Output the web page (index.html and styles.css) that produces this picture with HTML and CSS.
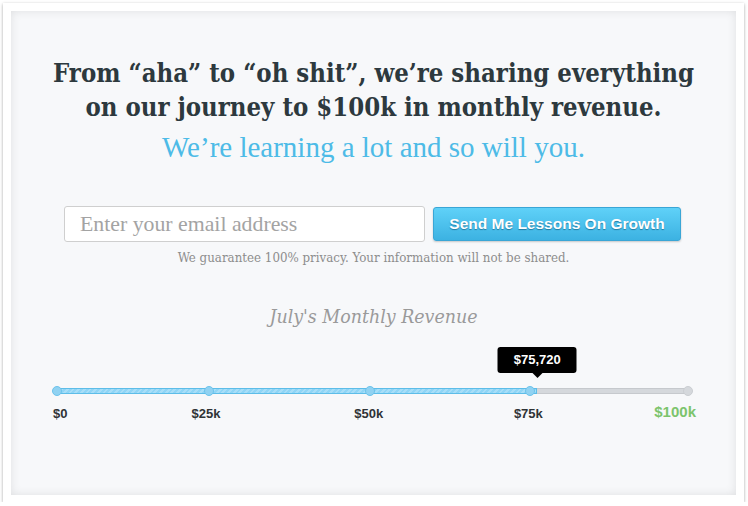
FILE: index.html
```html
<!DOCTYPE html>
<html>
<head>
<meta charset="utf-8">
<link rel="stylesheet" href="styles.css">
</head>
<body>
<div class="frame">
  <div class="panel">
    <h1 class="headline">From “aha” to “oh shit”, we’re sharing everything<br>on our journey to $100k in monthly revenue.</h1>
    <p class="subline">We’re learning a lot and so will you.</p>
    <form class="signup">
      <input class="email" type="text" placeholder="Enter your email address">
      <button class="send" type="button">Send Me Lessons On Growth</button>
    </form>
    <p class="privacy">We guarantee 100% privacy. Your information will not be shared.</p>
    <p class="revenue-title">July's Monthly Revenue</p>
    <div class="scale">
      <div class="track"></div>
      <div class="fill" style="width: 76.1%"></div>
      <span class="dot dot-on" style="left: 0%"></span>
      <span class="dot dot-on" style="left: 24.1%"></span>
      <span class="dot dot-on" style="left: 49.6%"></span>
      <span class="dot dot-on" style="left: 75%"></span>
      <span class="dot dot-off" style="left: 100%"></span>
      <div class="tip" style="left: 76.1%">$75,720</div>
      <span class="label label-first">$0</span>
      <span class="label label-mid" style="left: 23.6%">$25k</span>
      <span class="label label-mid" style="left: 49.4%">$50k</span>
      <span class="label label-mid" style="left: 74.7%">$75k</span>
      <span class="label label-goal">$100k</span>
    </div>
  </div>
</div>
</body>
</html>
```

FILE: styles.css
```css
html, body {
  margin: 0;
  padding: 0;
  background: #ffffff;
}

.frame {
  margin: 3px 4px 0 3px;
  width: 741px;
  height: 499px;
  box-sizing: border-box;
  padding: 8px 8px 7px 8px;
  background: #ffffff;
  box-shadow: 0 1px 3px rgba(0, 0, 0, 0.35);
}

.panel {
  height: 100%;
  box-sizing: border-box;
  background: #f7f8fa;
  box-shadow: inset 0 0 10px rgba(0, 0, 0, 0.10);
  padding-top: 45px;
  text-align: center;
}

.headline {
  margin: 0;
  font-family: "DejaVu Serif Condensed", "DejaVu Serif", serif;
  font-stretch: condensed;
  font-weight: bold;
  font-size: 25.5px;
  line-height: 34px;
  color: #2d393e;
}

.subline {
  margin: 6px 0 0 0;
  font-family: "Liberation Serif", serif;
  font-size: 29px;
  line-height: 34px;
  color: #4dbbe7;
}

.signup {
  margin: 42px 0 0 0;
  display: flex;
  justify-content: center;
  align-items: flex-start;
  gap: 8px;
  padding-right: 2px;
}

.email {
  width: 361px;
  height: 36px;
  box-sizing: border-box;
  border: 1px solid #cfcfcf;
  border-radius: 3px;
  background: #ffffff;
  padding: 0 15px;
  font-family: "Liberation Serif", serif;
  font-size: 21.8px;
  color: #555;
  outline: none;
}

.email::placeholder {
  color: #a3a3a3;
}

.send {
  margin-top: 1px;
  width: 248px;
  height: 34px;
  box-sizing: border-box;
  border: 1px solid #3aa6d6;
  border-radius: 3px;
  background: linear-gradient(#5fd1f8, #3cb2e2);
  box-shadow: 0 1px 2px rgba(0, 0, 0, 0.2);
  font-family: "Liberation Sans", Arial, sans-serif;
  font-weight: bold;
  font-size: 15.5px;
  color: #ffffff;
  text-shadow: 0 1px 1px rgba(0, 70, 100, 0.55);
  padding: 0;
}

.privacy {
  margin: 8px 0 0 0;
  font-family: "DejaVu Serif Condensed", "DejaVu Serif", serif;
  font-stretch: condensed;
  font-size: 13.2px;
  line-height: 16px;
  color: #8d8d8d;
}

.revenue-title {
  margin: 39px 0 0 0;
  font-family: "DejaVu Serif Condensed", "DejaVu Serif", serif;
  font-stretch: condensed;
  font-style: italic;
  font-size: 19.4px;
  line-height: 24px;
  color: #9a9a9a;
}

.scale {
  position: relative;
  margin: 57px 48px 0 46px;
  height: 10px;
}

.track {
  position: absolute;
  left: 0;
  right: 0;
  top: 2px;
  height: 6px;
  box-sizing: border-box;
  background: #d5d8dc;
  border: 1px solid #c6c9cd;
}

.fill {
  position: absolute;
  left: 0;
  top: 2px;
  height: 6px;
  box-sizing: border-box;
  border: 1px solid #5dbde8;
  background: repeating-linear-gradient(135deg, #8fd5f6 0 2px, #a7def8 2px 4px);
}

.dot {
  position: absolute;
  top: 0;
  width: 10px;
  height: 10px;
  margin-left: -5px;
  box-sizing: border-box;
  border-radius: 50%;
}

.dot-on {
  background: #90d2f2;
  border: 1px solid #6cc3ec;
}

.dot-off {
  background: #d5d8dc;
  border: 1px solid #cbced2;
}

.tip {
  position: absolute;
  bottom: 23px;
  transform: translateX(-50%);
  width: 79px;
  height: 26px;
  line-height: 26px;
  background: #000000;
  border-radius: 3px;
  color: #ffffff;
  font-family: "Liberation Sans", Arial, sans-serif;
  font-weight: bold;
  font-size: 13px;
}

.tip::after {
  content: "";
  position: absolute;
  left: 50%;
  top: 100%;
  margin-left: -5px;
  border-left: 5px solid transparent;
  border-right: 5px solid transparent;
  border-top: 5px solid #000000;
}

.label {
  position: absolute;
  top: 20px;
  font-family: "Liberation Sans", Arial, sans-serif;
  font-weight: bold;
  font-size: 13px;
  line-height: 15px;
  color: #2f3336;
  white-space: nowrap;
}

.label-first {
  left: -4px;
}

.label-mid {
  transform: translateX(-50%);
}

.label-goal {
  right: -8px;
  top: 17px;
  font-size: 15px;
  line-height: 18px;
  color: #7cc46c;
}
```
